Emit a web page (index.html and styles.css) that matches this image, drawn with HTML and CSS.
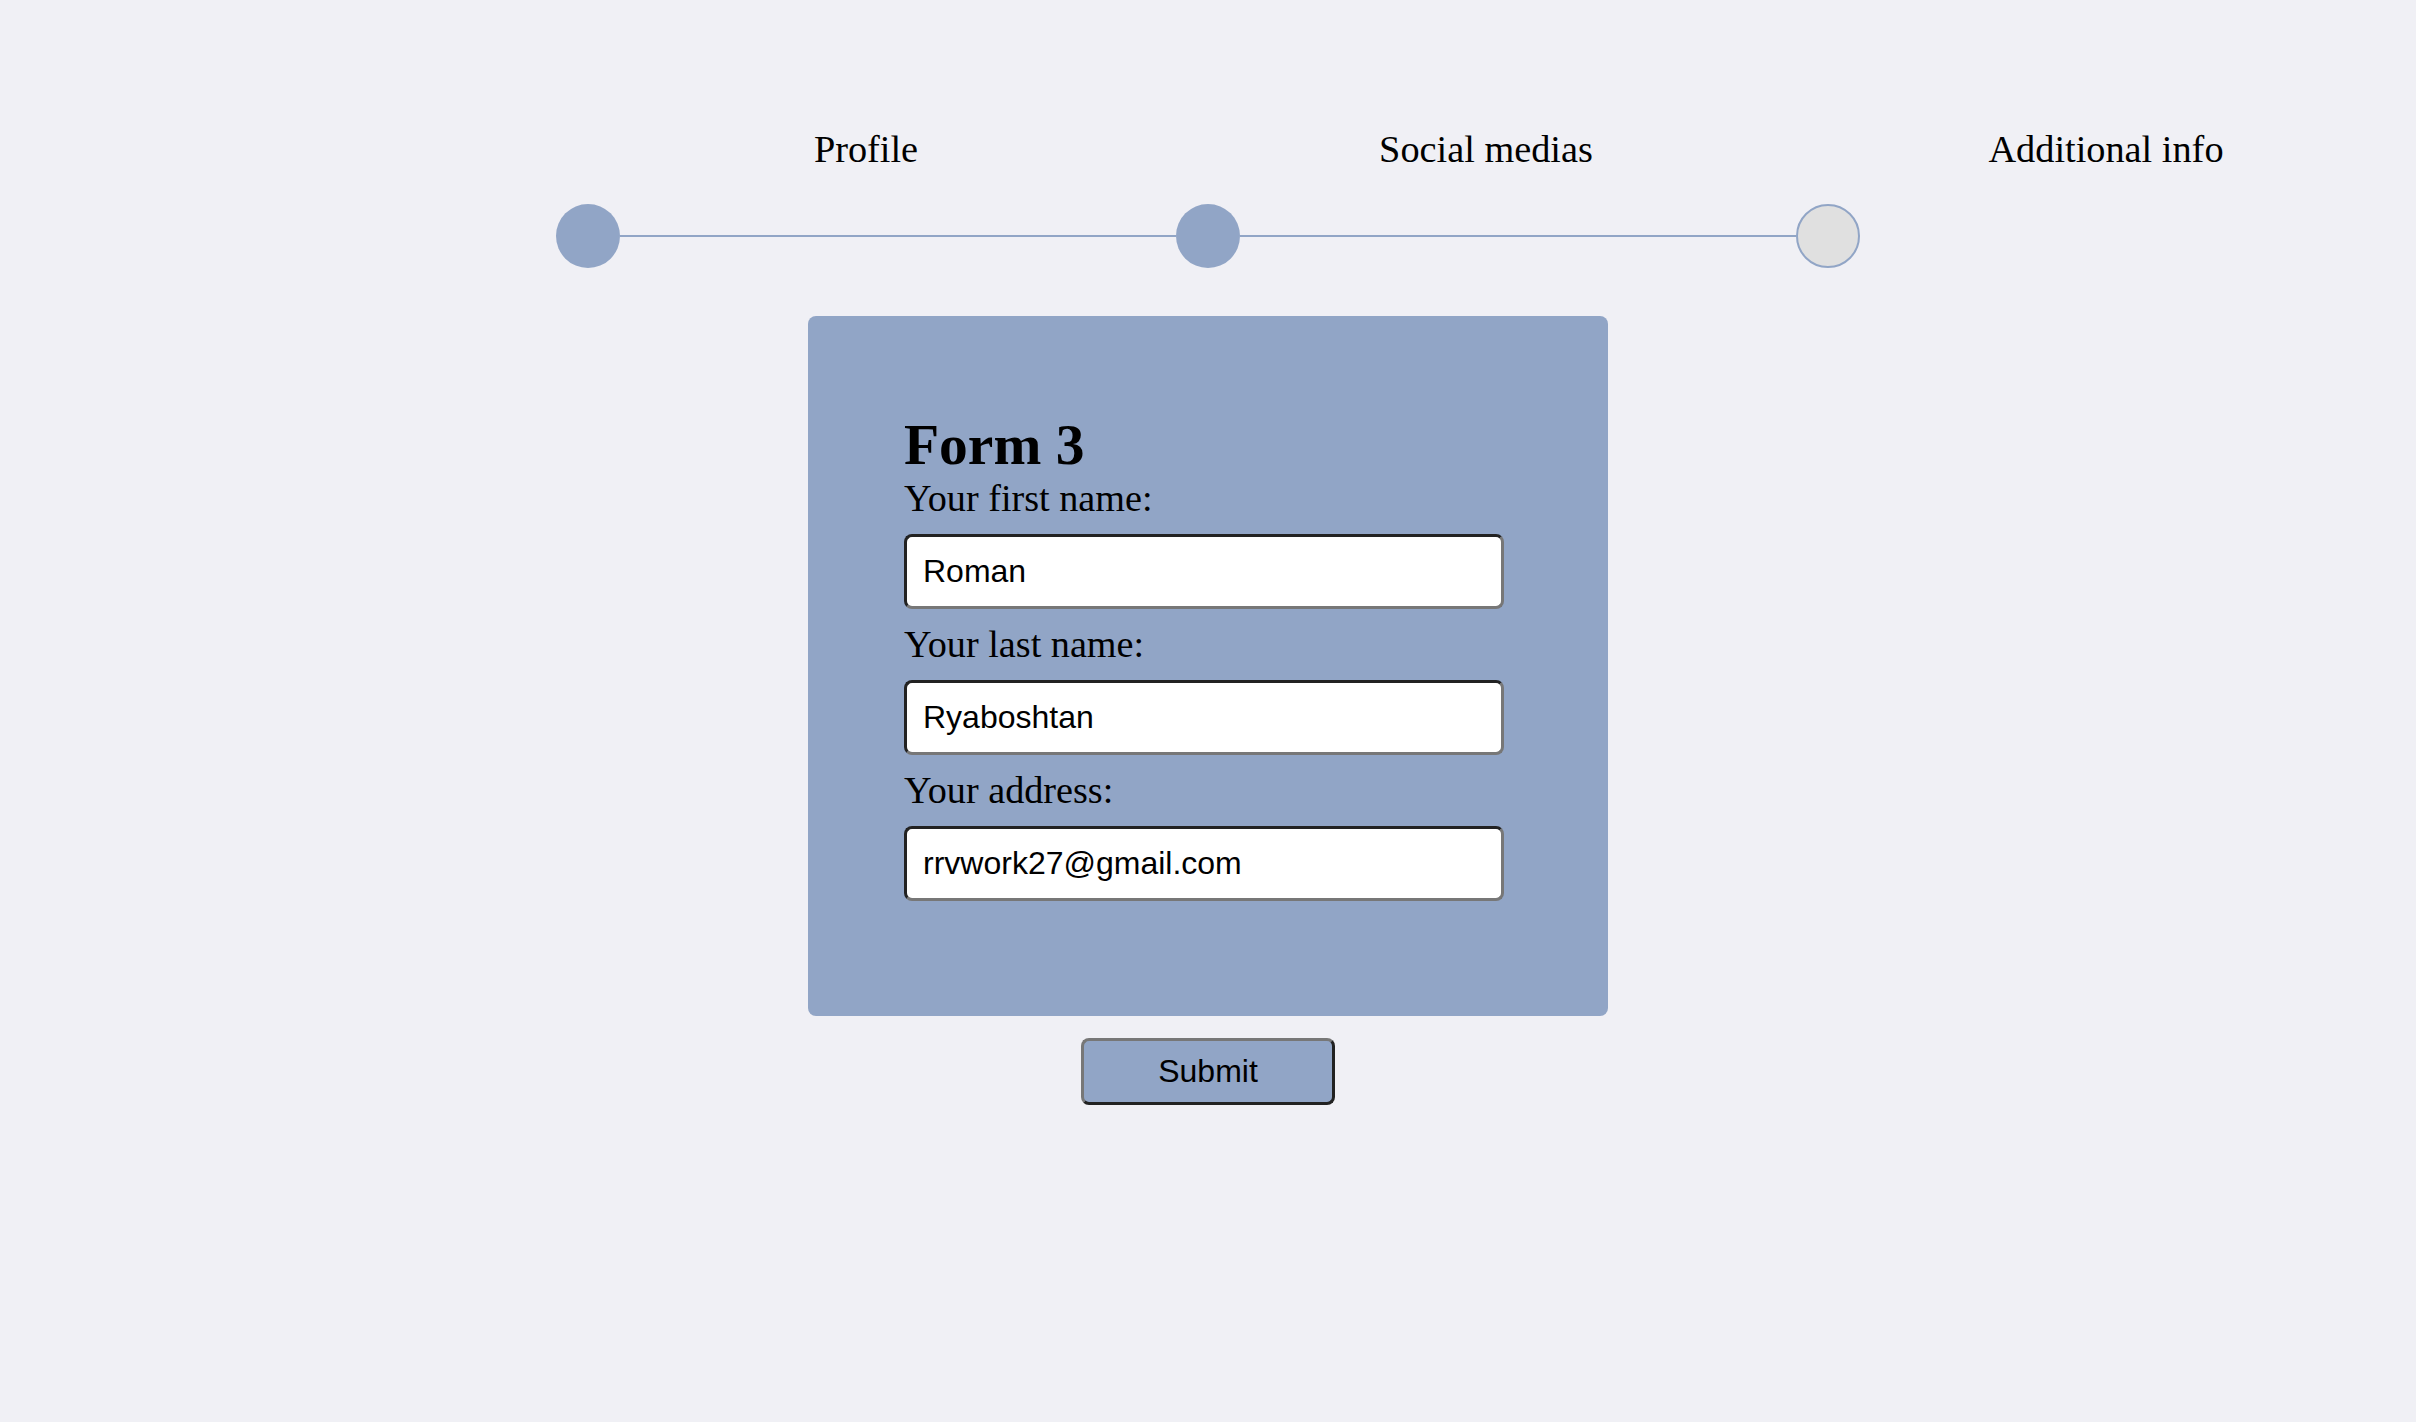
FILE: index.html
```html
<!DOCTYPE html>
<html lang="en">
<head>
<meta charset="utf-8">
<title>Form 3</title>
<link rel="stylesheet" href="styles.css">
</head>
<body>
  <div class="steps">
    <div class="step-labels">
      <div class="step-label">Profile</div>
      <div class="step-label">Social medias</div>
      <div class="step-label">Additional info</div>
    </div>
    <div class="step-track">
      <span class="dot done"></span>
      <span class="bar"></span>
      <span class="dot done"></span>
      <span class="bar"></span>
      <span class="dot"></span>
    </div>
  </div>

  <main class="page">
    <form class="card">
      <h1 class="card-title">Form 3</h1>
      <label class="field-label" for="first">Your first name:</label>
      <input class="field" id="first" type="text" value="Roman">
      <label class="field-label" for="last">Your last name:</label>
      <input class="field" id="last" type="text" value="Ryaboshtan">
      <label class="field-label" for="addr">Your address:</label>
      <input class="field" id="addr" type="text" value="rrvwork27@gmail.com">
    </form>
    <button class="submit" type="button">Submit</button>
  </main>
</body>
</html>
```

FILE: styles.css
```css
html, body {
  margin: 0;
  padding: 0;
}

body {
  background: #f0f0f5;
  font-family: "Liberation Serif", "Times New Roman", serif;
  color: #000;
  min-height: 1422px;
}

.steps {
  margin-left: 556px;
  width: 1860px;
  padding-top: 127px;
}

.step-labels {
  display: grid;
  grid-template-columns: repeat(3, 620px);
}

.step-label {
  text-align: center;
  font-size: 38.3px;
  line-height: 44px;
}

.step-track {
  display: flex;
  align-items: center;
  margin-top: 33px;
  height: 64px;
}

.dot {
  box-sizing: border-box;
  width: 64px;
  height: 64px;
  flex: 0 0 64px;
  border-radius: 50%;
  background: #e0e0e0;
  border: 2px solid #91a5c6;
}

.dot.done {
  background: #91a5c6;
  border: none;
}

.bar {
  flex: 0 0 556px;
  height: 2px;
  background: #91a5c6;
}

.page {
  display: flex;
  flex-direction: column;
  align-items: center;
  margin-top: 48px;
}

.card {
  box-sizing: border-box;
  width: 800px;
  height: 700px;
  padding: 97px 96px 0 96px;
  background: #91a5c6;
  border-radius: 8px;
  display: flex;
  flex-direction: column;
  align-items: flex-start;
}

.card-title {
  margin: 0;
  font-size: 57.5px;
  line-height: 64px;
  font-weight: bold;
}

.field-label {
  font-size: 38.2px;
  line-height: 43px;
}

.field {
  box-sizing: border-box;
  width: 600px;
  height: 75px;
  margin: 14px 0 14px;
  padding: 0 16px;
  font-family: "Liberation Sans", Arial, sans-serif;
  font-size: 32px;
  color: #000;
  background: #fff;
  border-width: 3px;
  border-style: solid;
  border-color: #222 #777 #777 #222;
  border-radius: 8px;
  outline: none;
}

.submit {
  box-sizing: border-box;
  margin-top: 22px;
  width: 254px;
  height: 67px;
  padding: 0;
  font-family: "Liberation Sans", Arial, sans-serif;
  font-size: 32px;
  color: #000;
  background: #91a5c6;
  border-width: 3px;
  border-style: solid;
  border-color: #777 #222 #222 #777;
  border-radius: 8px;
}
```
